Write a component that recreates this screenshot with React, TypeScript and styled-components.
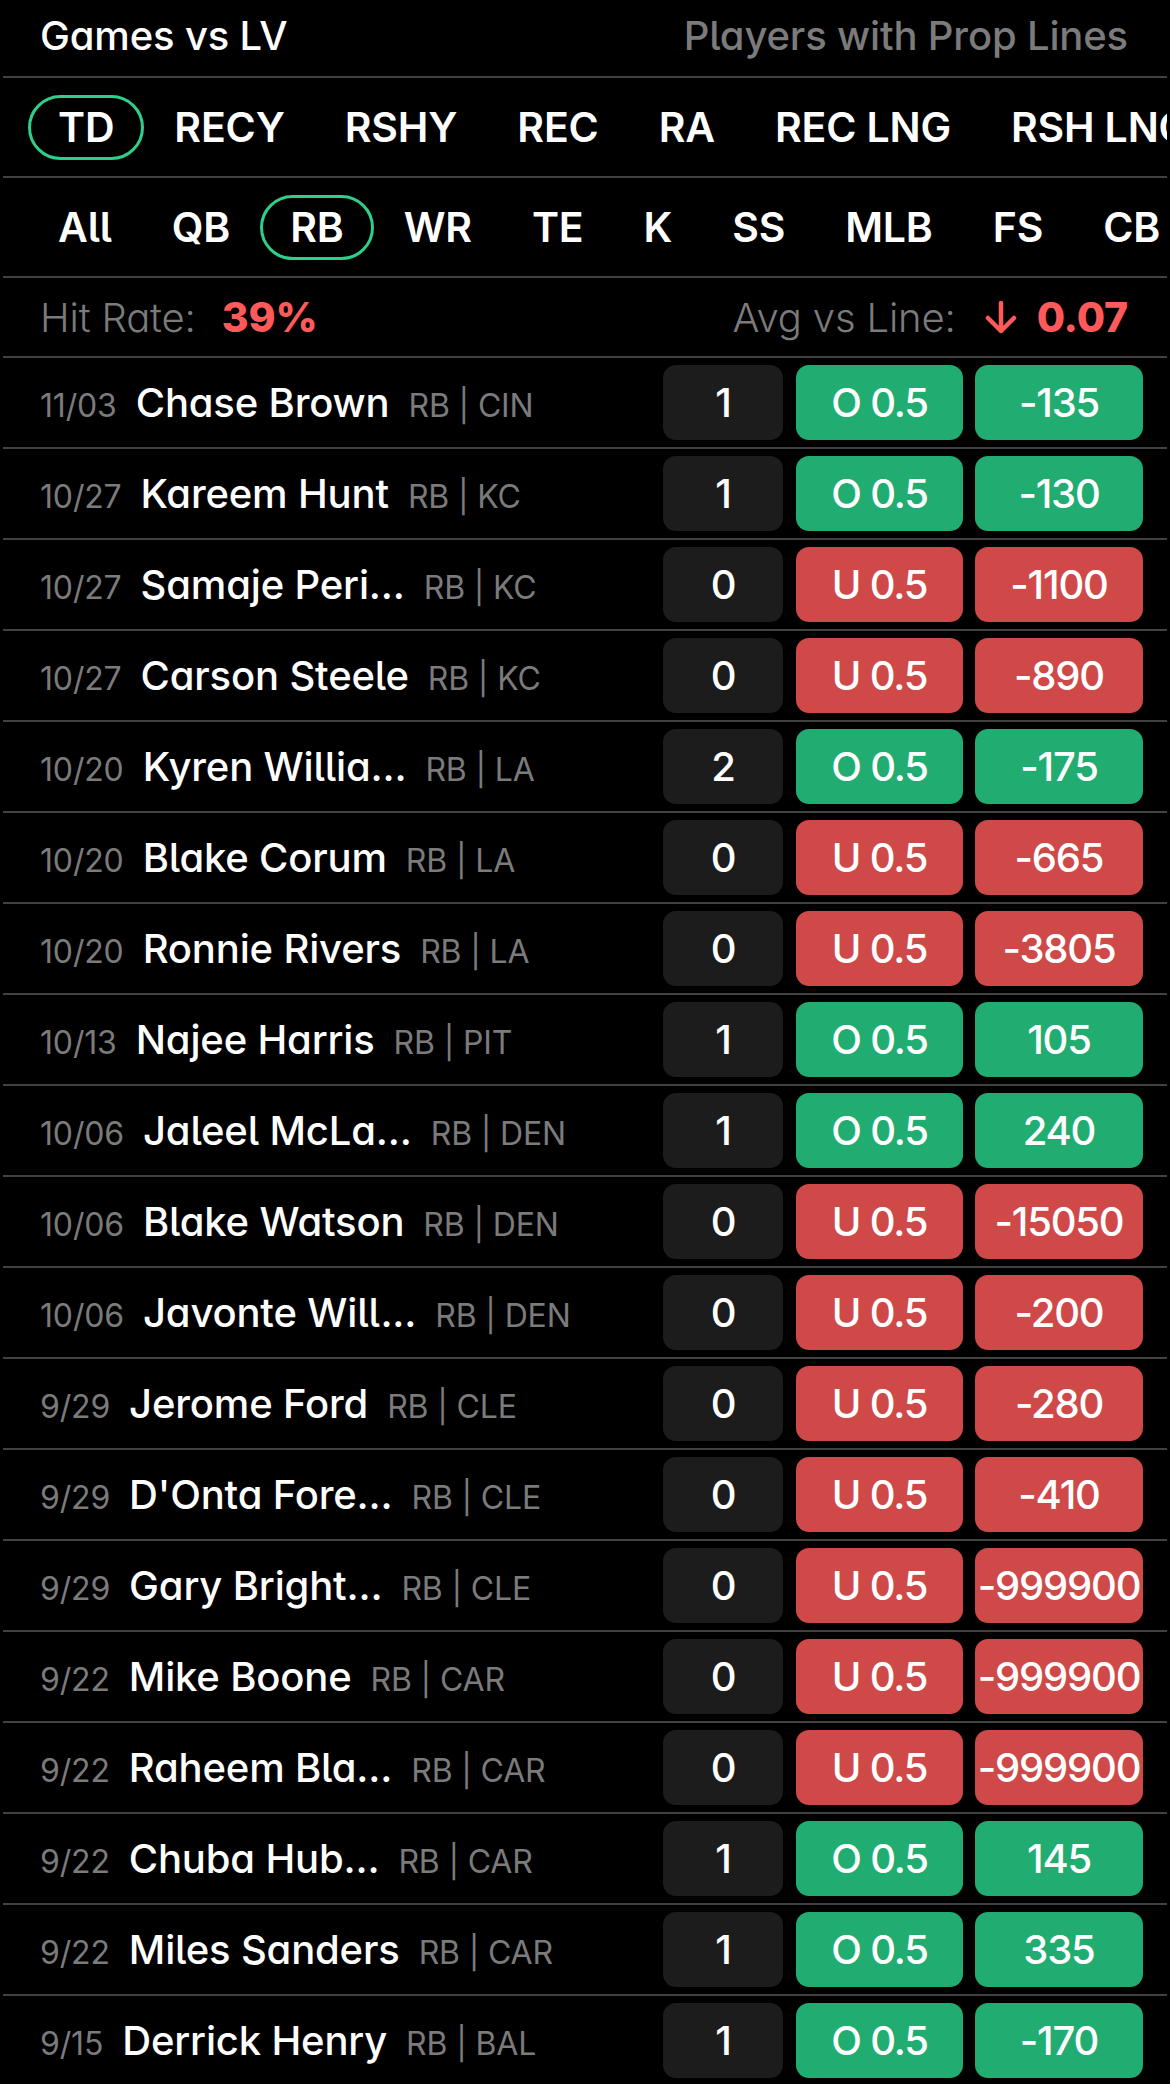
import React from 'react'
import styled, { createGlobalStyle } from 'styled-components'

type Tone = 'neutral' | 'over' | 'under'

interface GameRow {
  date: string
  name: string
  team: string
  result: string
  line: string
  odds: string
  hit: boolean
}

const colors = {
  bg: '#000000',
  divider: '#424242',
  muted: '#7b7b7b',
  mint: '#2ecf8b',
  over: '#21ad72',
  under: '#cf4949',
  neutral: '#1c1c1d',
  alert: '#ff5a5a',
}

const GlobalStyle = createGlobalStyle`
  html, body {
    margin: 0;
    padding: 0;
    background: ${colors.bg};
  }
  * {
    box-sizing: border-box;
  }
`

const Page = styled.div`
  width: 1170px;
  padding: 0 3px;
  background: ${colors.bg};
  color: #ffffff;
  font-family: Inter, 'Noto Sans', sans-serif;
  font-feature-settings: "cv05", "cv11";
  letter-spacing: -0.01em;
`

const HeaderBar = styled.header`
  height: 78px;
  display: flex;
  align-items: center;
  justify-content: space-between;
  padding: 0 39px 6px 37px;
  border-bottom: 2px solid ${colors.divider};
  font-size: 40px;
  font-weight: 500;
`

const Title = styled.span`
  color: #ffffff;
`

const Subtitle = styled.span`
  color: ${colors.muted};
`

const FilterBar = styled.nav`
  height: 100px;
  display: flex;
  align-items: center;
  padding-left: 25px;
  border-bottom: 2px solid ${colors.divider};
  overflow: hidden;
  white-space: nowrap;
`

const Chip = styled.span<{ $active?: boolean }>`
  flex-shrink: 0;
  display: flex;
  align-items: center;
  height: 65px;
  padding: 0 27px;
  border: 3px solid ${({ $active }) => ($active ? colors.mint : 'transparent')};
  border-radius: 999px;
  font-size: 41px;
  font-weight: 600;
  color: #ffffff;
`

const StatsBar = styled.section`
  height: 80px;
  display: flex;
  align-items: center;
  justify-content: space-between;
  padding: 0 39px 0 37px;
  border-bottom: 2px solid ${colors.divider};
  font-size: 40px;
`

const Stat = styled.div`
  display: flex;
  align-items: center;
`

const StatLabel = styled.span`
  color: ${colors.muted};
  font-weight: 300;
`

const StatValue = styled.span<{ $gap: number }>`
  margin-left: ${({ $gap }) => $gap}px;
  color: ${colors.alert};
  font-size: 41px;
  font-weight: 800;
`

const ArrowIcon = styled.svg`
  width: 34px;
  height: 34px;
  margin-left: 28px;
  flex-shrink: 0;
`

const Row = styled.div`
  height: 91px;
  display: flex;
  align-items: center;
  padding: 0 24px 0 37px;
  border-bottom: 2px solid ${colors.divider};
`

const PlayerInfo = styled.div`
  flex: 1;
  min-width: 0;
  display: flex;
  align-items: baseline;
  gap: 19px;
  white-space: nowrap;
  overflow: hidden;
`

const DateText = styled.span`
  font-size: 32px;
  font-weight: 400;
  color: ${colors.muted};
`

const PlayerName = styled.span`
  font-size: 40px;
  font-weight: 550;
  color: #ffffff;
`

const TeamText = styled.span`
  font-size: 32px;
  font-weight: 400;
  color: ${colors.muted};
`

const Cells = styled.div`
  display: flex;
  align-items: center;
`

const Cell = styled.div<{ $tone: Tone; $width: number; $gap?: number }>`
  width: ${({ $width }) => $width}px;
  height: 75px;
  margin-left: ${({ $gap }) => $gap ?? 0}px;
  display: flex;
  align-items: center;
  justify-content: center;
  border-radius: 13px;
  background: ${({ $tone }) =>
    $tone === 'over' ? colors.over : $tone === 'under' ? colors.under : colors.neutral};
  font-size: 40px;
  font-weight: 500;
  color: #ffffff;
  white-space: nowrap;
  letter-spacing: -0.03em;
`

const markets = ['TD', 'RECY', 'RSHY', 'REC', 'RA', 'REC LNG', 'RSH LNG']
const positions = ['All', 'QB', 'RB', 'WR', 'TE', 'K', 'SS', 'MLB', 'FS', 'CB']

const over = (date: string, name: string, team: string, result: string, odds: string): GameRow => ({
  date, name, team, result, line: 'O 0.5', odds, hit: true,
})
const under = (date: string, name: string, team: string, odds: string): GameRow => ({
  date, name, team, result: '0', line: 'U 0.5', odds, hit: false,
})

const games: GameRow[] = [
  over('11/03', 'Chase Brown', 'CIN', '1', '-135'),
  over('10/27', 'Kareem Hunt', 'KC', '1', '-130'),
  under('10/27', 'Samaje Peri...', 'KC', '-1100'),
  under('10/27', 'Carson Steele', 'KC', '-890'),
  over('10/20', 'Kyren Willia...', 'LA', '2', '-175'),
  under('10/20', 'Blake Corum', 'LA', '-665'),
  under('10/20', 'Ronnie Rivers', 'LA', '-3805'),
  over('10/13', 'Najee Harris', 'PIT', '1', '105'),
  over('10/06', 'Jaleel McLa...', 'DEN', '1', '240'),
  under('10/06', 'Blake Watson', 'DEN', '-15050'),
  under('10/06', 'Javonte Will...', 'DEN', '-200'),
  under('9/29', 'Jerome Ford', 'CLE', '-280'),
  under('9/29', "D'Onta Fore...", 'CLE', '-410'),
  under('9/29', 'Gary Bright...', 'CLE', '-999900'),
  under('9/22', 'Mike Boone', 'CAR', '-999900'),
  under('9/22', 'Raheem Bla...', 'CAR', '-999900'),
  over('9/22', 'Chuba Hub...', 'CAR', '1', '145'),
  over('9/22', 'Miles Sanders', 'CAR', '1', '335'),
  over('9/15', 'Derrick Henry', 'BAL', '1', '-170'),
]

const ArrowDown = () => (
  <ArrowIcon viewBox="0 0 34 34" fill="none" stroke={colors.alert} strokeWidth={4.5} strokeLinecap="round" strokeLinejoin="round">
    <path d="M17 3v28M4 18l13 13 13-13" />
  </ArrowIcon>
)

const App: React.FC = () => {
  return (
    <Page>
      <GlobalStyle />
      <HeaderBar>
        <Title>Games vs LV</Title>
        <Subtitle>Players with Prop Lines</Subtitle>
      </HeaderBar>

      <FilterBar>
        {markets.map((m) => (
          <Chip key={m} $active={m === 'TD'}>{m}</Chip>
        ))}
      </FilterBar>

      <FilterBar>
        {positions.map((p) => (
          <Chip key={p} $active={p === 'RB'}>{p}</Chip>
        ))}
      </FilterBar>

      <StatsBar>
        <Stat>
          <StatLabel>Hit Rate:</StatLabel>
          <StatValue $gap={26}>39%</StatValue>
        </Stat>
        <Stat>
          <StatLabel>Avg vs Line:</StatLabel>
          <ArrowDown />
          <StatValue $gap={19}>0.07</StatValue>
        </Stat>
      </StatsBar>

      {games.map((g, i) => {
        const tone: Tone = g.hit ? 'over' : 'under'
        return (
          <Row key={i}>
            <PlayerInfo>
              <DateText>{g.date}</DateText>
              <PlayerName>{g.name}</PlayerName>
              <TeamText>RB | {g.team}</TeamText>
            </PlayerInfo>
            <Cells>
              <Cell $tone="neutral" $width={120}>{g.result}</Cell>
              <Cell $tone={tone} $width={167} $gap={13}>{g.line}</Cell>
              <Cell $tone={tone} $width={168} $gap={12}>{g.odds}</Cell>
            </Cells>
          </Row>
        )
      })}
    </Page>
  )
}

export default App
